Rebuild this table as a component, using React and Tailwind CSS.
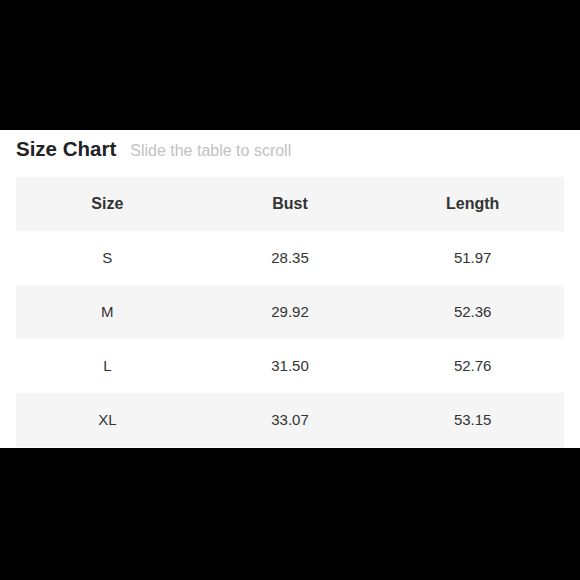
export default function App() {
  const rows = [
    ["S", "28.35", "51.97"],
    ["M", "29.92", "52.36"],
    ["L", "31.50", "52.76"],
    ["XL", "33.07", "53.15"],
  ];
  return (
    <div className="w-[580px] h-[580px] bg-black flex flex-col" style={{ fontFamily: '"Liberation Sans", Arial, sans-serif' }}>
      <div className="h-[130px] shrink-0" />
      <div className="h-[318px] shrink-0 bg-white overflow-hidden px-4 pt-[5px]">
        <div className="flex items-baseline h-[28px] leading-[28px]">
          <span className="text-[20.5px] font-bold text-[#222]">Size Chart</span>
          <span className="ml-[14px] text-[16px] text-[#c2c2c2]">Slide the table to scroll</span>
        </div>
        <div className="mt-[14px] w-[548px]">
          <div className="grid grid-cols-3 h-[54px] items-center bg-[#f5f5f5] rounded-t-[3px] text-[16px] font-bold text-[#333] text-center">
            <div>Size</div>
            <div>Bust</div>
            <div>Length</div>
          </div>
          {rows.map((r, i) => (
            <div
              key={r[0]}
              className={`grid grid-cols-3 h-[54px] items-center text-[15px] text-[#333] text-center ${i % 2 === 1 ? "bg-[#f5f5f5]" : "bg-white"}`}
            >
              <div>{r[0]}</div>
              <div>{r[1]}</div>
              <div>{r[2]}</div>
            </div>
          ))}
        </div>
      </div>
      <div className="flex-1" />
    </div>
  );
}
